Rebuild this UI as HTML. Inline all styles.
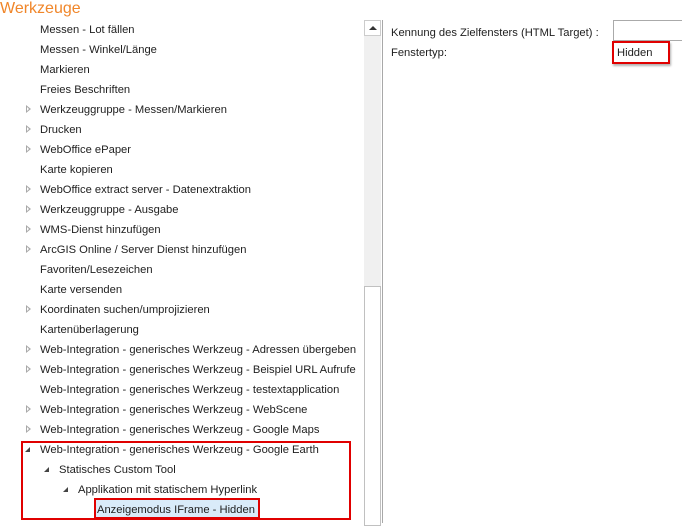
<!DOCTYPE html>
<html><head><style>
body{margin:0;width:682px;height:523px;background:#fff;position:relative;overflow:hidden;font-family:"Liberation Sans",sans-serif;font-size:11.2px;color:#1e1e1e}
.t{position:absolute;left:0;top:0px;font-size:16px;color:#f0862a}
.r{position:absolute;height:20px;line-height:22px;white-space:nowrap}
.a{position:absolute;width:0;height:0;border-top:4px solid transparent;border-bottom:4px solid transparent;border-left:5px solid #a9a9a9}
.a::after{content:"";position:absolute;left:-4px;top:-2px;border-top:2px solid transparent;border-bottom:2px solid transparent;border-left:2.5px solid #fff}
.e{position:absolute;width:0;height:0;border-left:5px solid transparent;border-bottom:5px solid #444}
.box{position:absolute;border:2px solid #e00000;box-sizing:border-box}
</style></head><body>
<div class="t">Werkzeuge</div>
<div class="r" style="left:40px;top:19px">Messen - Lot fällen</div>
<div class="r" style="left:40px;top:39px">Messen - Winkel/Länge</div>
<div class="r" style="left:40px;top:59px">Markieren</div>
<div class="r" style="left:40px;top:79px">Freies Beschriften</div>
<div class="r" style="left:40px;top:99px">Werkzeuggruppe - Messen/Markieren</div>
<div class="r" style="left:40px;top:119px">Drucken</div>
<div class="r" style="left:40px;top:139px">WebOffice ePaper</div>
<div class="r" style="left:40px;top:159px">Karte kopieren</div>
<div class="r" style="left:40px;top:179px">WebOffice extract server - Datenextraktion</div>
<div class="r" style="left:40px;top:199px">Werkzeuggruppe - Ausgabe</div>
<div class="r" style="left:40px;top:219px">WMS-Dienst hinzufügen</div>
<div class="r" style="left:40px;top:239px">ArcGIS Online / Server Dienst hinzufügen</div>
<div class="r" style="left:40px;top:259px">Favoriten/Lesezeichen</div>
<div class="r" style="left:40px;top:279px">Karte versenden</div>
<div class="r" style="left:40px;top:299px">Koordinaten suchen/umprojizieren</div>
<div class="r" style="left:40px;top:319px">Kartenüberlagerung</div>
<div class="r" style="left:40px;top:339px">Web-Integration - generisches Werkzeug - Adressen übergeben</div>
<div class="r" style="left:40px;top:359px">Web-Integration - generisches Werkzeug - Beispiel URL Aufrufe</div>
<div class="r" style="left:40px;top:379px">Web-Integration - generisches Werkzeug - testextapplication</div>
<div class="r" style="left:40px;top:399px">Web-Integration - generisches Werkzeug - WebScene</div>
<div class="r" style="left:40px;top:419px">Web-Integration - generisches Werkzeug - Google Maps</div>
<div class="r" style="left:40px;top:439px">Web-Integration - generisches Werkzeug - Google Earth</div>
<div class="r" style="left:59px;top:459px">Statisches Custom Tool</div>
<div class="r" style="left:78px;top:479px">Applikation mit statischem Hyperlink</div>
<div style="position:absolute;left:96px;top:500px;width:162px;height:17px;background:#d9ebf9"></div>
<div class="r" style="left:97px;top:499px">Anzeigemodus IFrame - Hidden</div>
<div class="a" style="left:26px;top:105px"></div>
<div class="a" style="left:26px;top:125px"></div>
<div class="a" style="left:26px;top:145px"></div>
<div class="a" style="left:26px;top:185px"></div>
<div class="a" style="left:26px;top:205px"></div>
<div class="a" style="left:26px;top:225px"></div>
<div class="a" style="left:26px;top:245px"></div>
<div class="a" style="left:26px;top:305px"></div>
<div class="a" style="left:26px;top:345px"></div>
<div class="a" style="left:26px;top:365px"></div>
<div class="a" style="left:26px;top:405px"></div>
<div class="a" style="left:26px;top:425px"></div>
<div class="e" style="left:25px;top:447px"></div>
<div class="e" style="left:44px;top:467px"></div>
<div class="e" style="left:63px;top:487px"></div>
<div class="box" style="left:21px;top:441px;width:330px;height:79px"></div>
<div class="box" style="left:94px;top:498px;width:166px;height:21px"></div>
<div style="position:absolute;left:364px;top:20px;width:17px;height:266px;background:#f0f0f0"></div>
<div style="position:absolute;left:364px;top:20px;width:17px;height:16px;background:#fff;border:1px solid #ccc;box-sizing:border-box"></div>
<div style="position:absolute;left:369px;top:26px;border-left:4px solid transparent;border-right:4px solid transparent;border-bottom:4px solid #333"></div>
<div style="position:absolute;left:364px;top:286px;width:17px;height:240px;border:1px solid #c0c0c0;box-sizing:border-box;background:#fff"></div>
<div style="position:absolute;left:382px;top:20px;width:1px;height:503px;background:#a8a8a8"></div>
<div class="r" style="left:391px;top:22px">Kennung des Zielfensters (HTML Target) :</div>
<div class="r" style="left:391px;top:42px">Fenstertyp:</div>
<div style="position:absolute;left:613px;top:20px;width:75px;height:21px;border:1px solid #aaa;box-sizing:border-box"></div>
<div class="r" style="left:617px;top:42px">Hidden</div>
<div class="box" style="left:612px;top:41px;width:58px;height:23px;box-shadow:1px 2px 2px rgba(0,0,0,.3)"></div>
</body></html>
